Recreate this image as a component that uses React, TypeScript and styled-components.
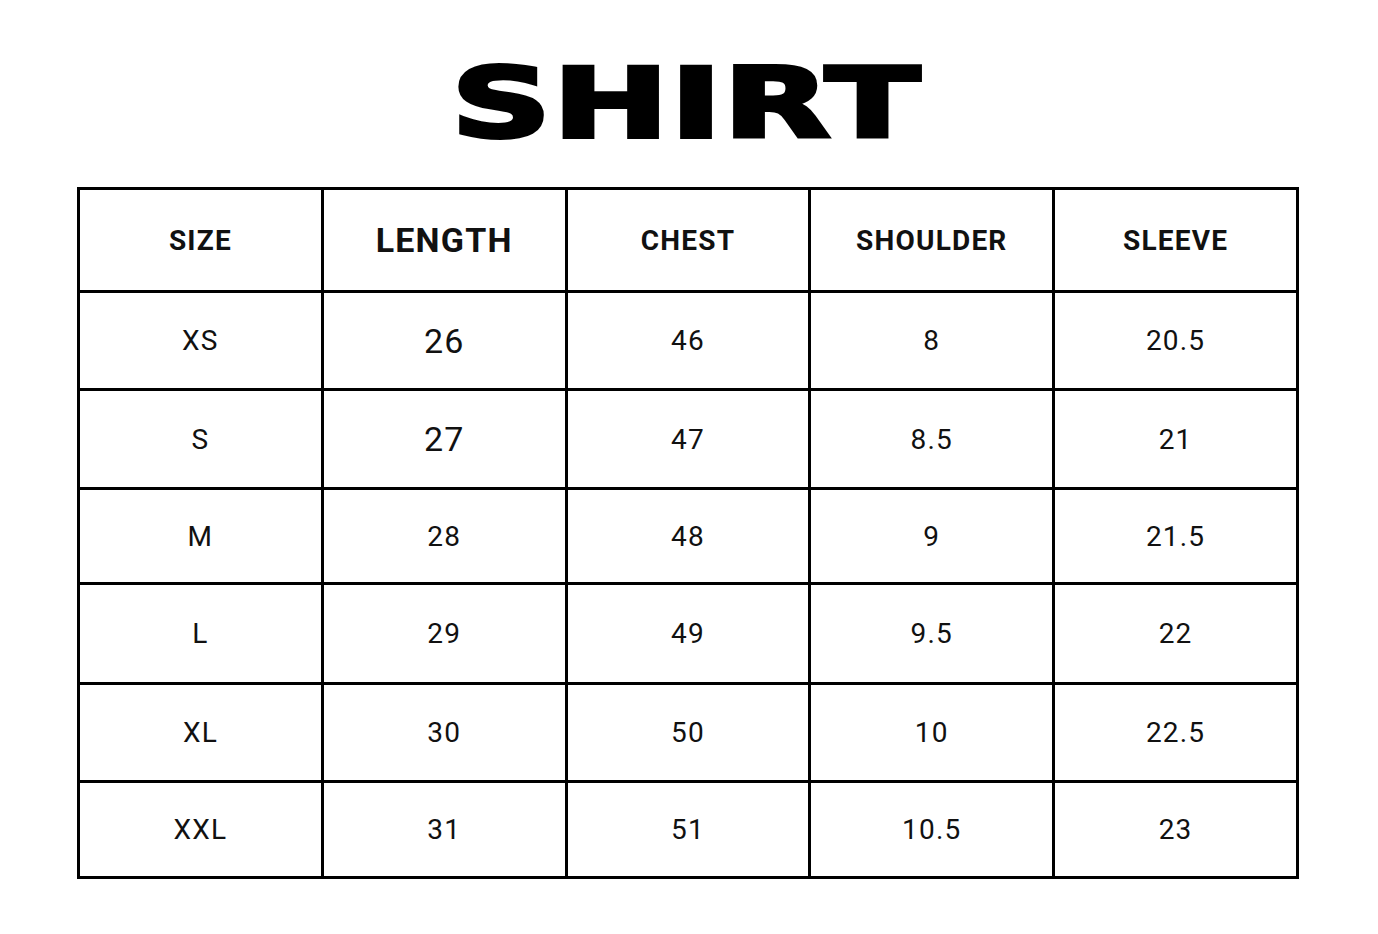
import React from "react";
import styled, { createGlobalStyle } from "styled-components";

const Global = createGlobalStyle`
  html, body { margin: 0; padding: 0; background: #fff; }
  body { font-family: Roboto, "Liberation Sans", sans-serif; color: #111; }
`;

const Page = styled.div`
  width: 1378px;
  height: 934px;
  display: flex;
  flex-direction: column;
  align-items: center;
  box-sizing: border-box;
  padding-top: 43px;
`;

const Title = styled.h1`
  margin: 0 6px 0 0;
  height: 120px;
  display: flex;
  align-items: center;
  justify-content: center;
  font-family: "DejaVu Sans", sans-serif;
  font-weight: 700;
  font-size: 97px;
  letter-spacing: 1px;
  color: #000;
  -webkit-text-stroke: 4px #000;
  transform: scaleX(1.43);
  line-height: 1;
`;

const Grid = styled.div`
  margin-top: 24px;
  align-self: flex-start;
  margin-left: 77px;
  width: 1222px;
  display: grid;
  grid-template-columns: repeat(5, 1fr);
  grid-template-rows: 103px 98px 99px 95px 100px 98px 96px;
  border-top: 3px solid #000;
  border-left: 3px solid #000;
  box-sizing: border-box;
`;

const Cell = styled.div<{ $head?: boolean; $size: number }>`
  display: flex;
  align-items: center;
  justify-content: center;
  border-right: 3px solid #000;
  border-bottom: 3px solid #000;
  font-family: Roboto, "Liberation Sans", sans-serif;
  font-weight: ${(p) => (p.$head ? 700 : 400)};
  font-size: ${(p) => p.$size}px;
  letter-spacing: 1.2px;
  color: #111;
`;

const headers = ["SIZE", "LENGTH", "CHEST", "SHOULDER", "SLEEVE"];
const rows = [
  ["XS", "26", "46", "8", "20.5"],
  ["S", "27", "47", "8.5", "21"],
  ["M", "28", "48", "9", "21.5"],
  ["L", "29", "49", "9.5", "22"],
  ["XL", "30", "50", "10", "22.5"],
  ["XXL", "31", "51", "10.5", "23"],
];

export default function App() {
  return (
    <Page>
      <Global />
      <Title>SHIRT</Title>
      <Grid>
        {headers.map((h) => (
          <Cell key={h} $head $size={h === "LENGTH" ? 34 : 28}>
            {h}
          </Cell>
        ))}
        {rows.map((r, i) =>
          r.map((v, j) => (
            <Cell key={`${i}-${j}`} $size={j === 1 && i < 2 ? 34 : 28}>
              {v}
            </Cell>
          ))
        )}
      </Grid>
    </Page>
  );
}
